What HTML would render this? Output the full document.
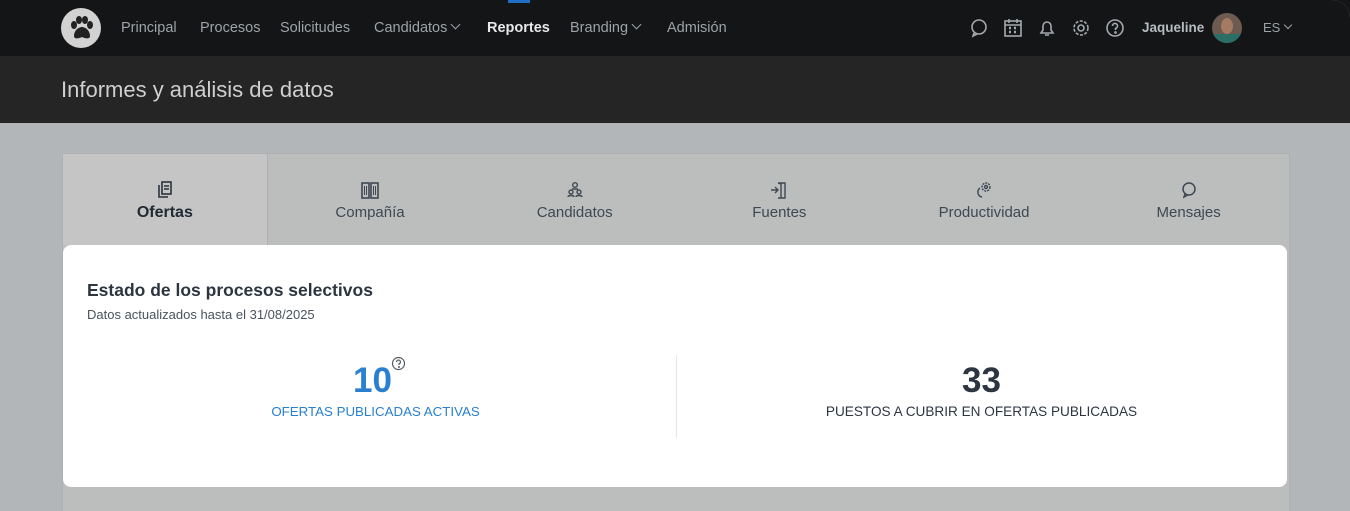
<!DOCTYPE html>
<html><head><meta charset="utf-8"><style>
*{box-sizing:border-box;margin:0;padding:0}
body{width:1350px;height:511px;overflow:hidden;background:#131517;font-family:"Liberation Sans",sans-serif}
.page{position:absolute;inset:0;background:#b3b6b8;border-top-right-radius:18px;overflow:hidden}
.nav{position:absolute;left:0;top:0;width:1350px;height:56px;background:#131517}
.logo{position:absolute;left:61px;top:8px;width:40px;height:40px;border-radius:50%;background:#d2d2d2}
.nav a{position:absolute;top:20px;font-size:14.5px;color:#9ea3a8;text-decoration:none;white-space:nowrap}
.nav a.b{color:#e8e8e8;font-weight:bold}
.chev{display:inline-block;width:7px;height:7px;border-right:1.3px solid #9ea3a8;border-bottom:1.3px solid #9ea3a8;transform:rotate(45deg);margin-left:5px;position:relative;top:-4px}
.mark{position:absolute;left:508px;top:0;width:22px;height:3px;background:#1f6fc5}
.hdr{position:absolute;left:0;top:56px;width:1350px;height:67px;background:#252525}
.tabs{position:absolute;left:62px;top:153px;width:1228px;height:360px;background:#bcbebd;border:1px solid #aeb0b1}
.tab{position:absolute;top:0;width:204.7px;height:91px;text-align:center;color:#3e4852;font-size:15px}
.tab.act{background:#c5c5c5;border-right:1px solid #aeb0b1;color:#222a33;font-weight:bold;font-size:16px}
.tab svg{display:block;margin:27px auto 5px}
.card{position:absolute;left:63px;top:245px;width:1224px;height:242px;background:#fff;border-radius:8px}
.ic{position:absolute;top:18px}
</style></head><body><div class="page">
<div class="nav">
<div class="mark"></div>
<div class="logo"><svg width="40" height="40" viewBox="0 0 40 40"><g fill="#222"><ellipse cx="13" cy="17" rx="3" ry="4"/><ellipse cx="18" cy="12" rx="3" ry="4"/><ellipse cx="24" cy="12" rx="3" ry="4"/><ellipse cx="29" cy="17" rx="3" ry="4"/><path d="M13 28c0-6 5-9 8-9s8 3 8 9c0 3-4 3-8 1-4 2-8 2-8-1z"/></g></svg></div>
<a style="left:121px">Principal</a><a style="left:200px">Procesos</a><a style="left:280px">Solicitudes</a><a style="left:374px">Candidatos<span class="chev"></span></a><a class="b" style="left:487px">Reportes</a><a style="left:570px">Branding<span class="chev"></span></a><a style="left:667px">Admisión</a>
<svg class="ic" style="left:969px" width="20" height="20" viewBox="0 0 20 20" fill="none" stroke="#a5a9ad" stroke-width="1.6"><circle cx="10" cy="9" r="7"/><path d="M5 15l-1 3 4-2"/></svg>
<svg class="ic" style="left:1003px" width="20" height="20" viewBox="0 0 20 20" fill="none" stroke="#a5a9ad" stroke-width="1.6"><rect x="2" y="3" width="16" height="15"/><path d="M6 1v4M14 1v4M2 7h16"/><path d="M6 10h2M11 10h2M6 14h2M11 14h2" stroke-width="2.5"/></svg>
<svg class="ic" style="left:1037px" width="20" height="20" viewBox="0 0 20 20" fill="none" stroke="#a5a9ad" stroke-width="1.6"><path d="M4 15h12l-2-3V8a4 4 0 0 0-8 0v4z"/><path d="M8 17h4"/></svg>
<svg class="ic" style="left:1071px" width="20" height="20" viewBox="0 0 20 20" fill="none" stroke="#a5a9ad" stroke-width="1.6"><circle cx="10" cy="10" r="3"/><circle cx="10" cy="10" r="7" stroke-dasharray="3 1.5"/></svg>
<svg class="ic" style="left:1105px" width="20" height="20" viewBox="0 0 20 20" fill="none" stroke="#a5a9ad" stroke-width="1.6"><circle cx="10" cy="10" r="8"/><path d="M7.5 8a2.5 2.5 0 1 1 3 2.4V12"/><circle cx="10.5" cy="14.5" r=".6"/></svg>
<a class="b" style="left:1142px;font-size:13.5px;color:#b8bcc0;top:20px">Jaqueline</a>
<div style="position:absolute;left:1212px;top:13px;width:30px;height:30px;border-radius:50%;background:#6d5a50;overflow:hidden"><div style="margin:5px auto 0;width:12px;height:16px;border-radius:50%;background:#a47a63"></div><div style="width:30px;height:10px;background:#2a6e66"></div></div>
<a style="left:1263px;font-size:13px;top:20px">ES<span class="chev" style="width:6px;height:6px"></span></a>
</div>
<div class="hdr"></div><h1 style="position:absolute;left:61px;top:77px;font-weight:normal;font-size:22px;color:#cfcfcf">Informes y análisis de datos</h1>
<div class="tabs">
<div class="tab act" style="left:0"><svg width="18" height="18" viewBox="0 0 18 18" fill="none" stroke="#2a323b" stroke-width="1.6"><path d="M3 4v12h9"/><rect x="6" y="1" width="9" height="12"/><path d="M8 5h5M8 8h5"/></svg>Ofertas</div>
<div class="tab" style="left:204.7px"><svg width="18" height="18" viewBox="0 0 18 18" fill="none" stroke="#3e4852" stroke-width="1.6"><rect x="1" y="2" width="7" height="15"/><rect x="10" y="2" width="7" height="15"/><path d="M3.5 5v9M5.5 5v9M12.5 5v9M14.5 5v9" stroke-width="1"/></svg>Compañía</div>
<div class="tab" style="left:409.3px"><svg width="18" height="18" viewBox="0 0 18 18" fill="none" stroke="#3e4852" stroke-width="1.4"><circle cx="9" cy="4" r="2.3"/><circle cx="5" cy="11" r="2"/><circle cx="13" cy="11" r="2"/><path d="M2 16c0-2 6-2 6 0M10 16c0-2 6-2 6 0M6 8h6"/></svg>Candidatos</div>
<div class="tab" style="left:614px"><svg width="18" height="18" viewBox="0 0 18 18" fill="none" stroke="#3e4852" stroke-width="1.4"><path d="M8 2h7v15H8M8 2l3 1v14"/><path d="M1 9h7M5 6l3 3-3 3"/></svg>Fuentes</div>
<div class="tab" style="left:818.7px"><svg width="18" height="18" viewBox="0 0 18 18" fill="none" stroke="#3e4852" stroke-width="1.4"><circle cx="11" cy="6" r="4" stroke-dasharray="2 1"/><circle cx="11" cy="6" r="1.5"/><path d="M5 7a5 5 0 0 0 2 9"/></svg>Productividad</div>
<div class="tab" style="left:1023.3px"><svg width="18" height="18" viewBox="0 0 18 18" fill="none" stroke="#3e4852" stroke-width="1.5"><circle cx="9" cy="8" r="6"/><path d="M5 13l-1 3 4-2"/></svg>Mensajes</div>
</div>
<div class="card">
<div style="position:absolute;left:24px;top:35px;font-size:17.5px;font-weight:bold;color:#2d3640">Estado de los procesos selectivos</div>
<div style="position:absolute;left:24px;top:62px;font-size:13px;color:#4a535c">Datos actualizados hasta el 31/08/2025</div>
<div style="position:absolute;left:613px;top:110px;width:1px;height:83px;background:#e3e5e7"></div>
<div style="position:absolute;left:3px;width:613px;top:116px;text-align:center;font-size:35px;font-weight:bold;color:#2a80d0">10</div>
<svg style="position:absolute;left:328px;top:111px" width="15" height="15" viewBox="0 0 15 15" fill="none" stroke="#555d65" stroke-width="1.2"><circle cx="7.5" cy="7.5" r="6"/><path d="M5.6 6a1.9 1.9 0 1 1 2.4 1.8V9"/><circle cx="8" cy="11" r=".4"/></svg>
<div style="position:absolute;left:6px;width:613px;top:159px;text-align:center;font-size:13.3px;color:#2a80d0">OFERTAS PUBLICADAS ACTIVAS</div>
<div style="position:absolute;left:613px;width:611px;top:116px;text-align:center;font-size:35px;font-weight:bold;color:#2d3640">33</div>
<div style="position:absolute;left:613px;width:611px;top:159px;text-align:center;font-size:13.6px;color:#2d3640">PUESTOS A CUBRIR EN OFERTAS PUBLICADAS</div>
</div>
</div></body></html>
